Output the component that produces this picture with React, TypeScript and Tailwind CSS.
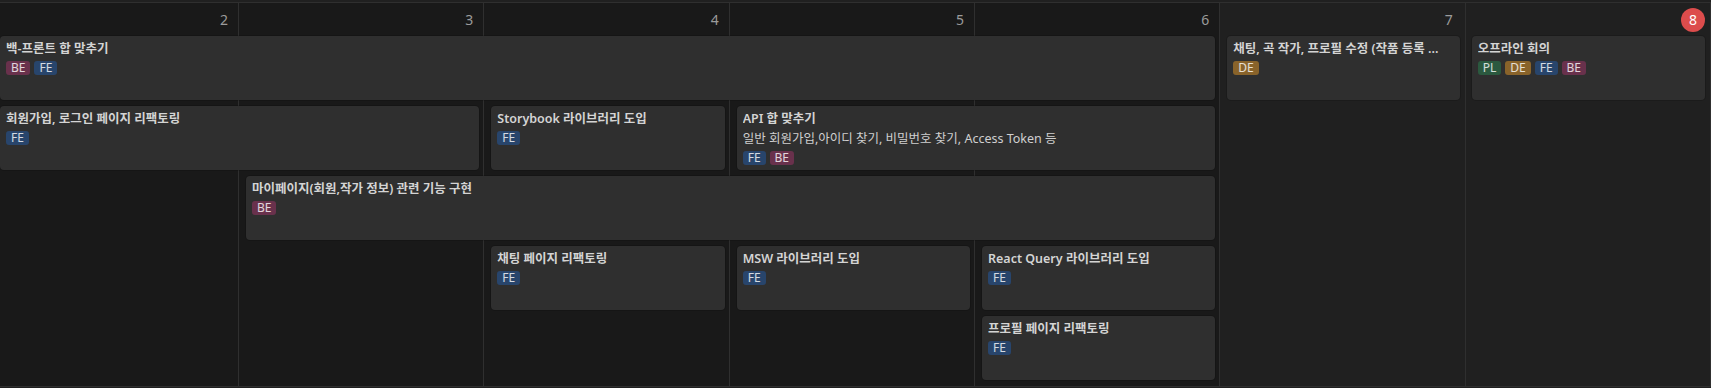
type Tag = "BE" | "FE" | "DE" | "PL";

const tagColor: Record<Tag, string> = {
  BE: "bg-[#69314c]",
  FE: "bg-[#28456c]",
  DE: "bg-[#89632a]",
  PL: "bg-[#2b593f]",
};

type Day = { label: string; cls: string; weekend?: boolean; today?: boolean };

const days: Day[] = [
  { label: "2", cls: "col-start-1 pr-[10px]" },
  { label: "3", cls: "col-start-2 pr-[10px]" },
  { label: "4", cls: "col-start-3 pr-[10px]" },
  { label: "5", cls: "col-start-4 pr-[10px]" },
  { label: "6", cls: "col-start-5 pr-[10px]" },
  { label: "7", cls: "col-start-6 pr-[12px]", weekend: true },
  { label: "8", cls: "col-start-7 pr-[5px]", weekend: true, today: true },
];

type Ev = { title: string; desc?: string; tags: Tag[]; cls: string };

const events: Ev[] = [
  { title: "백-프론트 합 맞추기", tags: ["BE", "FE"], cls: "row-start-2 col-start-1 col-span-5 pr-[5px]" },
  { title: "채팅, 곡 작가, 프로필 수정 (작품 등록 ...", tags: ["DE"], cls: "row-start-2 col-start-6 col-span-1 pl-[7px] pr-[6px]" },
  { title: "오프라인 회의", tags: ["PL", "DE", "FE", "BE"], cls: "row-start-2 col-start-7 col-span-1 pl-[6px] pr-[6px]" },
  { title: "회원가입, 로그인 페이지 리팩토링", tags: ["FE"], cls: "row-start-3 col-start-1 col-span-2 pr-[5px]" },
  { title: "Storybook 라이브러리 도입", tags: ["FE"], cls: "row-start-3 col-start-3 col-span-1 pl-[7px] pr-[5px]" },
  {
    title: "API 합 맞추기",
    desc: "일반 회원가입,아이디 찾기, 비밀번호 찾기, Access Token 등",
    tags: ["FE", "BE"],
    cls: "row-start-3 col-start-4 col-span-2 pl-[7px] pr-[5px]",
  },
  { title: "마이페이지(회원,작가 정보) 관련 기능 구현", tags: ["BE"], cls: "row-start-4 col-start-2 col-span-4 pl-[7px] pr-[5px]" },
  { title: "채팅 페이지 리팩토링", tags: ["FE"], cls: "row-start-5 col-start-3 col-span-1 pl-[7px] pr-[5px]" },
  { title: "MSW 라이브러리 도입", tags: ["FE"], cls: "row-start-5 col-start-4 col-span-1 pl-[7px] pr-[5px]" },
  { title: "React Query 라이브러리 도입", tags: ["FE"], cls: "row-start-5 col-start-5 col-span-1 pl-[7px] pr-[5px]" },
  { title: "프로필 페이지 리팩토링", tags: ["FE"], cls: "row-start-6 col-start-5 col-span-1 pl-[7px] pr-[5px]" },
];

function EventCard({ ev }: { ev: Ev }) {
  return (
    <div className={`${ev.cls} min-w-0 z-10`}>
      <div className="h-16 rounded-[4px] bg-[#2f2f2f] px-[6px] pt-[4px] flex flex-col shadow-[0_0_0_1px_rgba(0,0,0,0.15)]">
        <div className="text-[12.5px] leading-[18px] font-semibold text-[#d4d4d4] whitespace-nowrap overflow-hidden text-ellipsis">
          {ev.title}
        </div>
        {ev.desc && (
          <div className="mt-[2px] text-[12.5px] leading-[18px] text-[#cfcfcf] whitespace-nowrap overflow-hidden text-ellipsis">
            {ev.desc}
          </div>
        )}
        <div className="mt-[3px] flex gap-1">
          {ev.tags.map((t) => (
            <span key={t} className={`${tagColor[t]} h-[14px] px-[5px] rounded-[3px] text-[12px] leading-[14px] text-white/80`}>
              {t}
            </span>
          ))}
        </div>
      </div>
    </div>
  );
}

export default function App() {
  return (
    <div className="h-[388px] w-full overflow-hidden bg-[#202020] pt-[2px] font-['Noto_Sans','Noto_Sans_CJK_KR',sans-serif]">
      <div className="border-t border-b border-[#2f2f2f] grid grid-cols-[239px_repeat(6,minmax(0,1fr))] grid-rows-[33px_repeat(5,70px)]">
        {days.map((d) => (
          <div
            key={d.label}
            className={`${d.cls} row-start-1 row-span-6 border-r border-[#2f2f2f] ${d.weekend ? "bg-[#202020]" : "bg-[#191919]"}`}
          >
            <div className="h-[33px] flex items-center justify-end">
              {d.today ? (
                <span className="w-6 h-6 rounded-full bg-[#dc4c4c] text-white text-[14px] flex items-center justify-center">
                  {d.label}
                </span>
              ) : (
                <span className="text-[14px] text-[#9b9b9b]">{d.label}</span>
              )}
            </div>
          </div>
        ))}
        {events.map((ev) => (
          <EventCard key={ev.title} ev={ev} />
        ))}
      </div>
    </div>
  );
}
